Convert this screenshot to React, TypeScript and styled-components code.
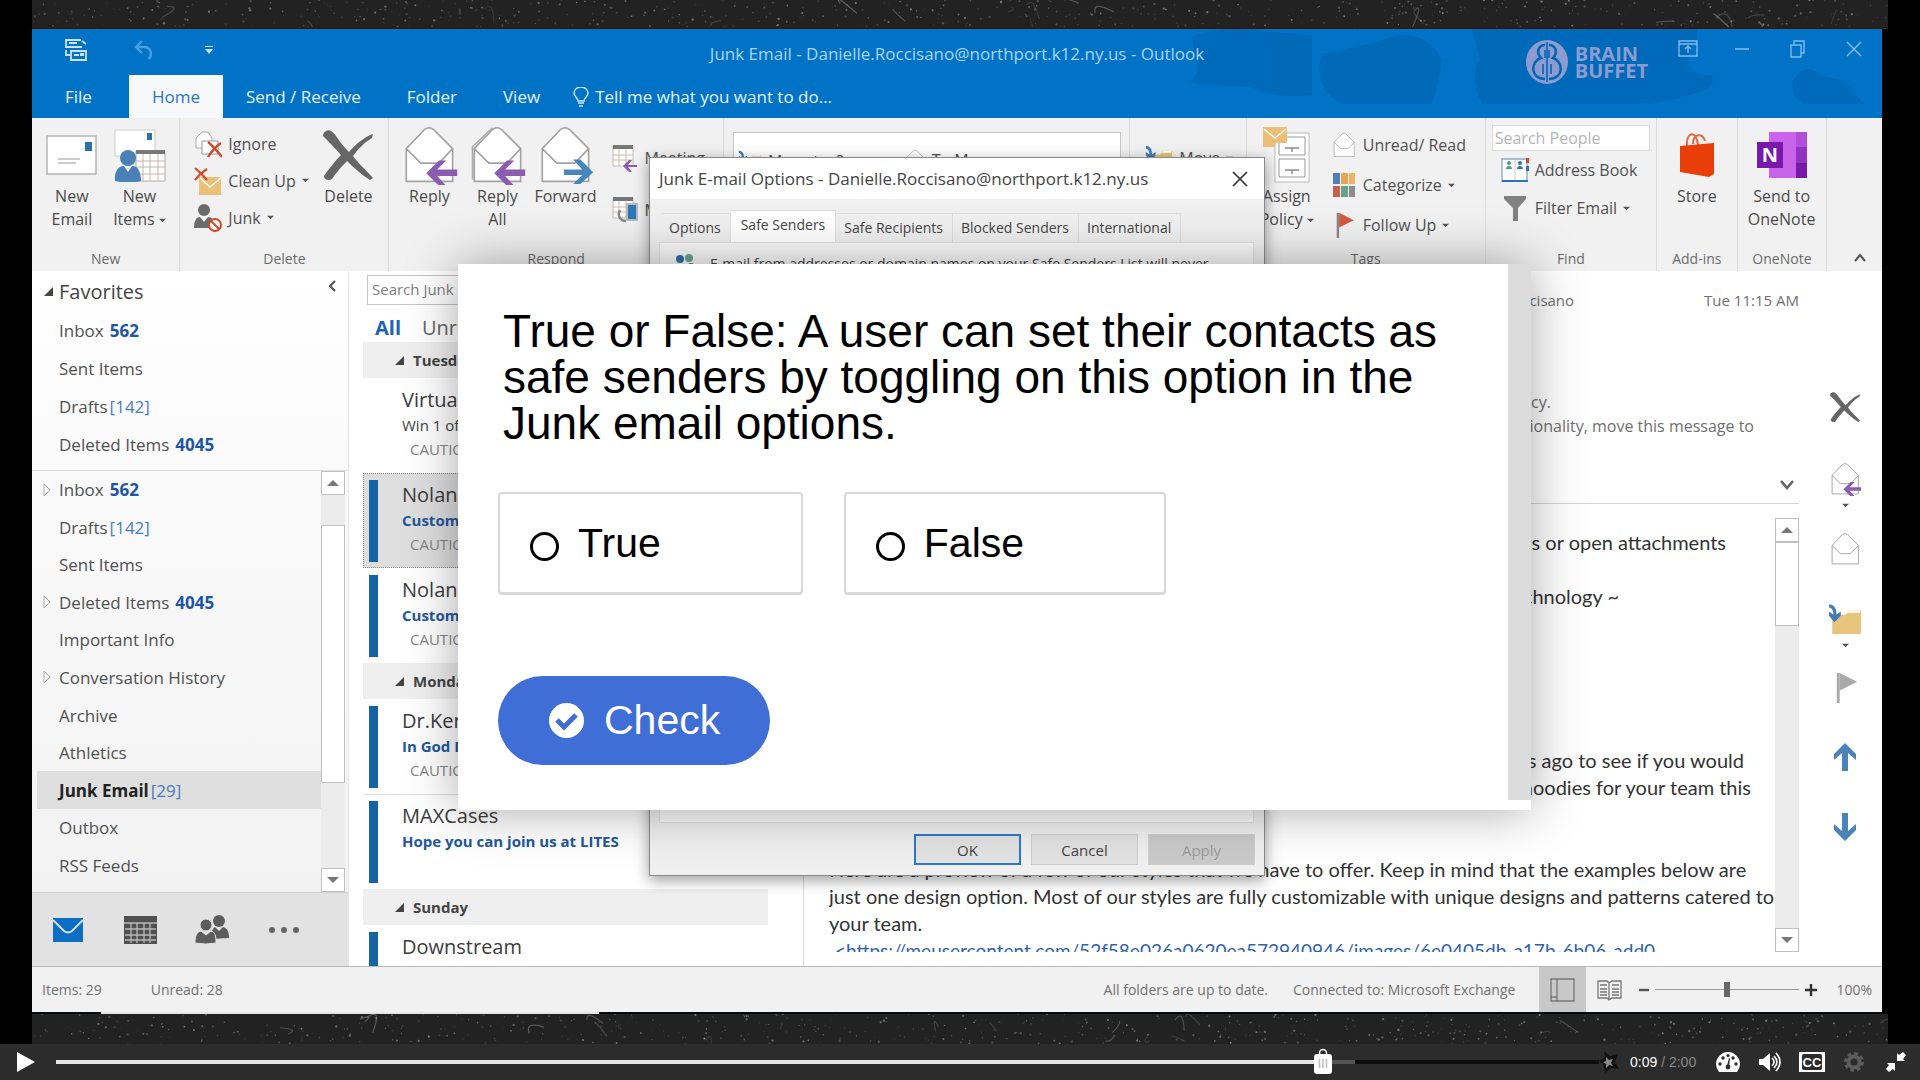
import React, { useState } from "react";
import styled, { createGlobalStyle, css } from "styled-components";

const UI = '"Open Sans", "Noto Sans", sans-serif';
const ARIAL = '"Liberation Sans", Arial, sans-serif';

const GlobalStyle = createGlobalStyle`
  *, *::before, *::after { box-sizing: border-box; }
  body { margin: 0; background: #000; font-family: ${UI}; color: #444; overflow: hidden; }
  button, input { font: inherit; color: inherit; }
  button { border: 0; background: none; padding: 0; cursor: pointer; }
  svg { display: block; flex: none; }
  h2, p, ul { margin: 0; padding: 0; font-weight: 400; }
  ul { list-style: none; }
`;

/* ---------- player shell ---------- */

const Player = styled.div`
  display: flex;
  flex-direction: column;
  height: 100vh;
`;
const Stage = styled.main`
  position: relative;
  flex: 1;
  min-height: 0;
  display: flex;
  flex-direction: column;
  padding: 0 32px;
  overflow: hidden;
`;
const Strip = styled.svg<{ $h: number }>`
  width: 100%;
  height: ${(p) => p.$h}px;
  background: #222;
`;
const AppWindow = styled.section`
  position: relative;
  flex: 1;
  min-height: 0;
  margin-right: 6px;
  display: flex;
  flex-direction: column;
  background: #fff;
`;
const TaskLine = styled.div`
  height: 2px;
  background: #04080f;
  padding-left: 69px;
  flex: none;
  &::before {
    content: "";
    display: block;
    width: 498px;
    height: 2px;
    background: #e4e4e0;
  }
`;

function Grain({ h, seed }: { h: number; seed: number }) {
  let s = seed;
  const r = () => {
    s = (s * 16807) % 2147483647;
    return s / 2147483647;
  };
  for (let i = 0; i < 20; i++) r();
  const dots = Array.from({ length: 620 }, () => ({ x: r() * 1856, y: r() * h, w: 0.6 + r() * 1.3, o: 0.08 + r() * 0.4 }));
  const hairs = Array.from({ length: 22 }, () => {
    const x = r() * 1856;
    const y = r() * h;
    return { d: `M${x} ${y}q${r() * 24 - 8} ${r() * 20 - 14} ${r() * 28 - 8} ${r() * 24 - 8}`, o: 0.12 + r() * 0.3 };
  });
  return (
    <Strip $h={h} viewBox={`0 0 1856 ${h}`} preserveAspectRatio="xMidYMid slice" aria-hidden>
      {dots.map((d, i) => (
        <circle key={i} cx={d.x} cy={d.y} r={d.w / 1.6} fill="#ddd" opacity={d.o} />
      ))}
      {hairs.map((d, i) => (
        <path key={i} d={d.d} fill="none" stroke="#bbb" strokeWidth="1.2" opacity={d.o} />
      ))}
      {seed < 100 && <rect y={h - 2} width="1850" height="2" fill="#36190c" />}
    </Strip>
  );
}

/* ---------- title bar and tabs ---------- */

const Header = styled.header`
  position: relative;
  flex: none;
  background: #0173c7;
  color: #e6f2fc;
`;
const Art = styled.svg`
  position: absolute;
  right: 0;
  top: 0;
  width: 700px;
  height: 75px;
`;
const TitleRow = styled.div`
  position: relative;
  display: grid;
  grid-template-columns: 1fr auto 1fr;
  height: 46px;
  align-items: center;
`;
const QuickAccess = styled.div`
  display: flex;
  align-items: center;
  padding: 0 0 4px 32px;
  gap: 46px;
`;
const WindowTitle = styled.span`
  font-size: 17px;
  line-height: 22px;
  padding-top: 4px;
  color: #a9d3f5;
`;
const WindowButtons = styled.div`
  display: flex;
  justify-content: flex-end;
  padding: 0 16px 6px 0;
  gap: 32px;
  color: #7fb9ea;
`;
const Watermark = styled.div`
  position: absolute;
  right: 234px;
  top: 11px;
  display: flex;
  align-items: center;
  gap: 6px;
  color: #8d9bd0;
  font-size: 20px;
  font-weight: 700;
  line-height: 17px;
`;
const TabRow = styled.nav`
  position: relative;
  display: flex;
  height: 43px;
  font-size: 17px;
`;
const RibbonTab = styled.button<{ $active?: boolean; $wide?: boolean }>`
  padding: 0 23px;
  display: flex;
  align-items: center;
  gap: 8px;
  color: #e6f2fc;
  ${(p) => p.$wide && css`padding: 0 37px 0 33px;`}
  ${(p) => p.$active && css`background: #f6f8fa; color: #2b76bd;`}
`;
const TellMe = styled.button`
  display: flex;
  align-items: center;
  gap: 6px;
  padding-left: 10px;
  color: #e6f2fc;
`;

/* ---------- ribbon ---------- */

const Ribbon = styled.div`
  flex: none;
  height: 153px;
  display: flex;
  background: #f1f1f1;
`;
const Group = styled.section<{ $grow: number }>`
  flex: ${(p) => p.$grow} 1 0;
  min-width: 0;
  display: flex;
  flex-direction: column;
  border-right: 1px solid #dcdcdc;
  &:last-child { border-right: 0; }
`;
const GroupBody = styled.div<{ $pad?: number }>`
  flex: 1;
  display: flex;
  padding: 7px 6px 0 ${(p) => p.$pad ?? 6}px;
`;
const GroupLabel = styled.span`
  font-size: 14px;
  line-height: 24px;
  text-align: center;
  color: #6b6b6b;
`;
const BigButton = styled.button`
  width: 68px;
  display: flex;
  flex-direction: column;
  align-items: center;
  font-size: 16px;
  line-height: 23px;
  color: #4a4a4a;
  white-space: pre;
`;
const IconBox = styled.span`
  height: 60px;
  display: flex;
  align-items: center;
  justify-content: center;
`;
const SmallStack = styled.div<{ $pitch: number; $left?: number; $top?: number }>`
  flex: 1;
  display: flex;
  flex-direction: column;
  padding: ${(p) => p.$top ?? 0}px 0 0 ${(p) => p.$left ?? 0}px;
  > button { height: ${(p) => p.$pitch}px; }
`;
const SmallButton = styled.button`
  display: flex;
  align-items: center;
  gap: 6px;
  font-size: 16px;
  color: #505050;
  white-space: nowrap;
`;
const StepsBox = styled.div`
  flex: 1;
  margin: 7px 2px 0 3px;
  height: 90px;
  padding: 16px 4px;
  display: flex;
  align-items: flex-start;
  gap: 60px;
  background: #fff;
  border: 1px solid #c6c6c6;
`;
const PeopleSearch = styled.input`
  width: 100%;
  height: 26px;
  border: 1px solid #dadada;
  background: #fff;
  padding: 0 2px;
  font-size: 16px;
  outline: 0;
  &::placeholder { color: #b5b5b5; }
`;
const Collapse = styled.button`
  margin: auto 15px 6px auto;
  color: #555;
`;

const Caret = ({ size = 7, color = "#555" }: { size?: number; color?: string }) => (
  <svg width={size} height={size} viewBox="0 0 8 8"><path d="M0 2h8L4 6z" fill={color} /></svg>
);

const Cross = ({ size }: { size: number }) => (
  <svg width={size} height={size} viewBox="0 0 50 50">
    <path d="M3 1C7-1 10 2 13 6c4 6 8 11 13 16C32 15 41 7 50 4l-1 4c-7 4-14 11-19 18 5 7 13 14 20 22l-3 2C39 45 31 38 24 31 18 37 13 43 9 49c-3 2-8 1-8-3C6 39 12 31 18 25 12 18 6 12 0 6c0-2 1-4 3-5z" fill="#666" />
  </svg>
);

const OpenMail = ({ size, arrow, all }: { size: number; arrow?: "left" | "right"; all?: boolean }) => (
  <svg width={size} height={size} viewBox="0 0 58 66">
    {all && <path d="M2 60V24L24 3" fill="none" stroke="#aaa" strokeWidth="1.6" />}
    <path d="M4 26 24 5q5-4 10 0L55 26v36H4z" fill="#fff" stroke="#a2a2a2" strokeWidth="1.8" />
    <path d="M4 26 20 42h20L55 26" fill="none" stroke="#a2a2a2" strokeWidth="1.8" />
    {arrow === "left" && <path d="M60 49H38L48 39h-8L26 53l14 14h8L38 56h22z" fill="#8c5cb0" />}
    {arrow === "right" && <path d="M28 49h20L38 38h8l14 14-14 13h-8l10-10H28z" fill="#4785bd" />}
  </svg>
);

const FolderMove = ({ size = 28 }: { size?: number }) => (
  <svg width={size} height={size} viewBox="0 0 32 32">
    <path d="M4 12h13l3-4h11v22H4z" fill="#e8c57c" />
    <path d="M18 10l3-2h9v2z" fill="#fff" />
    <path d="M1 2c6 1 7 5 7 10l4-3v4l-6 6-5-6V9l4 3c0-4-1-6-4-7z" fill="#3f7bb5" />
  </svg>
);

const Flag = ({ color, pole, size }: { color: string; pole: string; size: number }) => (
  <svg width={size} height={size} viewBox="0 0 28 32">
    <path d="M5 1h3v31H5z" fill={pole} />
    <path d="M8 1l18 9L8 19z" fill={color} />
  </svg>
);

const MeetingIcon = ({ kind }: { kind: "reply" | "phone" }) => (
  <svg width="26" height="28" viewBox="0 0 26 28">
    <path d="M1 2h20v20H1z" fill="#fff" stroke="#bbb" />
    <path d="M1 1h20v4H1z" fill="#777" />
    <path d="M1 11h20M1 16h20M7 5v17M14 5v17" stroke="#d5b8a8" strokeWidth="1" />
    {kind === "reply" ? (
      <path d="M25 21h-9l4-5h-3l-6 6 6 6h3l-4-5h9z" fill="#8c5cb0" />
    ) : (
      <g>
        <path d="M15 8h10v16H15z" fill="#2f78b9" stroke="#bbb" strokeWidth="2" />
        <path d="M8 14c-3 5 0 11 6 11" fill="none" stroke="#888" strokeWidth="2.4" />
      </g>
    )}
  </svg>
);

function RibbonBar() {
  return (
    <Ribbon>
      <Group $grow={148}>
        <GroupBody>
          <BigButton>
            <IconBox>
              <svg width="51" height="42" viewBox="0 0 51 42">
                <path d="M1 2h49v38H1z" fill="#fff" stroke="#b4b4b4" strokeWidth="1.5" />
                <path d="M39 8h7v9h-7z" fill="#2c6fb3" />
                <path d="M12 25h22M12 29h18" stroke="#bbb" strokeWidth="1.5" />
              </svg>
            </IconBox>
            {"New\nEmail"}
          </BigButton>
          <BigButton>
            <IconBox>
              <svg width="52" height="54" viewBox="0 0 52 54">
                <path d="M1 2h40v26H1z" fill="#fff" stroke="#ccc" />
                <path d="M33 5h5v7h-5z" fill="#2c6fb3" />
                <path d="M22 23h29v30H22z" fill="#fff" stroke="#aaa" />
                <path d="M22 22h29v4H22z" fill="#777" />
                <path d="M22 33h29M22 39h29M22 46h29M29 26v27M36 26v27M44 26v27" stroke="#c9b3aa" />
                <circle cx="14" cy="30" r="8" fill="#4a80b8" />
                <path d="M1 53c-1-9 3-15 9-15l4 6 4-6c6 0 9 6 9 15-8 2-18 2-26 0z" fill="#4a80b8" />
              </svg>
            </IconBox>
            <span>New{"\n"}Items <Inline><Caret /></Inline></span>
          </BigButton>
        </GroupBody>
        <GroupLabel>New</GroupLabel>
      </Group>

      <Group $grow={209}>
        <GroupBody $pad={14}>
          <SmallStack $pitch={37}>
            <SmallButton>
              <svg width="28" height="28" viewBox="0 0 28 28">
                <path d="M2 8l6-6h6l4 6v10H2z" fill="#fff" stroke="#aaa" />
                <path d="M8 11h16v13H8z" fill="#fff" stroke="#999" />
                <path d="M14 12c5 4 9 9 14 15M27 13c-6 4-10 9-13 14" stroke="#d2492a" strokeWidth="2.4" />
              </svg>
              Ignore
            </SmallButton>
            <SmallButton>
              <svg width="28" height="28" viewBox="0 0 28 28">
                <path d="M5 10h22v18H5z" fill="#ecc078" />
                <path d="M6 11l10 9 11-9" fill="none" stroke="#fff" strokeWidth="1.4" />
                <path d="M1 1c5 4 8 7 12 12M13 2C8 5 4 9 1 13" stroke="#d2492a" strokeWidth="2.2" />
              </svg>
              Clean Up <Caret />
            </SmallButton>
            <SmallButton>
              <svg width="28" height="28" viewBox="0 0 28 28">
                <circle cx="10" cy="6" r="6" fill="#6b6b6b" />
                <path d="M0 24c0-8 3-11 6-11l4 5 4-5c4 0 6 3 6 11z" fill="#6b6b6b" />
                <circle cx="21" cy="21" r="6" fill="#fff" stroke="#d2492a" strokeWidth="2" />
                <path d="M17 17l8 8" stroke="#d2492a" strokeWidth="2" />
              </svg>
              Junk <Caret />
            </SmallButton>
          </SmallStack>
          <BigButton>
            <IconBox><Cross size={50} /></IconBox>
            Delete
          </BigButton>
        </GroupBody>
        <GroupLabel>Delete</GroupLabel>
      </Group>

      <Group $grow={335}>
        <GroupBody>
          <BigButton><IconBox><OpenMail size={60} arrow="left" /></IconBox>Reply</BigButton>
          <BigButton><IconBox><OpenMail size={60} arrow="left" all /></IconBox>{"Reply\nAll"}</BigButton>
          <BigButton><IconBox><OpenMail size={60} arrow="right" /></IconBox>Forward</BigButton>
          <SmallStack $pitch={52} $left={13} $top={7}>
            <SmallButton><MeetingIcon kind="reply" />Meeting</SmallButton>
            <SmallButton><MeetingIcon kind="phone" />More</SmallButton>
          </SmallStack>
        </GroupBody>
        <GroupLabel>Respond</GroupLabel>
      </Group>

      <Group $grow={407}>
        <GroupBody>
          <StepsBox>
            <SmallButton><FolderMove size={24} />Move to: ?</SmallButton>
            <SmallButton><OpenMail size={22} />To Manager</SmallButton>
          </StepsBox>
        </GroupBody>
        <GroupLabel>Quick Steps</GroupLabel>
      </Group>

      <Group $grow={116}>
        <GroupBody $pad={15}>
          <SmallStack $pitch={52} $top={7}>
            <SmallButton><FolderMove size={28} />Move <Caret /></SmallButton>
          </SmallStack>
        </GroupBody>
        <GroupLabel>Move</GroupLabel>
      </Group>

      <Group $grow={239}>
        <GroupBody>
          <BigButton>
            <IconBox>
              <svg width="48" height="56" viewBox="0 0 48 56">
                <path d="M12 6h34v49H12z" fill="#fff" stroke="#bbb" />
                <path d="M16 10h26v18H16zM16 32h26v18H16z" fill="#fff" stroke="#999" />
                <path d="M22 21h14M29 21v4M22 43h14M29 43v4" stroke="#888" strokeWidth="1.4" />
                <path d="M0 0h24v16H12v4H0z" fill="#ebbf77" />
                <path d="M1 2l11 9L23 2" fill="none" stroke="#fff" strokeWidth="1.4" />
              </svg>
            </IconBox>
            <span>Assign{"\n"}Policy <Inline><Caret /></Inline></span>
          </BigButton>
          <SmallStack $pitch={40} $left={10}>
            <SmallButton><OpenMail size={26} />Unread/ Read</SmallButton>
            <SmallButton>
              <svg width="26" height="26" viewBox="0 0 26 26">
                <path d="M2 1h7v11H2z" fill="#4f7fb5" /><path d="M10 1h7v11h-7z" fill="#e8a552" /><path d="M18 1h6v11h-6z" fill="#eeb463" />
                <path d="M2 14h7v11H2z" fill="#c9614d" /><path d="M10 14h7v11h-7z" fill="#67a386" /><path d="M18 14h6v11h-6z" fill="#8d8d8d" />
              </svg>
              Categorize <Caret />
            </SmallButton>
            <SmallButton><Flag size={26} color="#d4593f" pole="#888" />Follow Up <Caret /></SmallButton>
          </SmallStack>
        </GroupBody>
        <GroupLabel>Tags</GroupLabel>
      </Group>

      <Group $grow={171}>
        <GroupBody>
          <SmallStack $pitch={38}>
            <PeopleSearch aria-label="Search People" placeholder="Search People" />
            <SmallButton>
              <Indent />
              <svg width="28" height="26" viewBox="0 0 28 26">
                <path d="M1 2h25v22H1z" fill="#fff" stroke="#8fa9c4" strokeWidth="1.4" />
                <path d="M1 24h26" stroke="#2f72b5" strokeWidth="2" />
                <path d="M14 3v20" stroke="#ccc" />
                <circle cx="8" cy="6" r="2" fill="#4b9c7d" /><path d="M5 12c0-4 6-4 6 0z" fill="#4b9c7d" />
                <circle cx="19" cy="6" r="2" fill="#2f72b5" /><path d="M16 12c0-4 6-4 6 0z" fill="#2f72b5" />
                <path d="M25 1h3v5h-3z" fill="#d2492a" /><path d="M25 9h3v5h-3z" fill="#2f72b5" />
              </svg>
              Address Book
            </SmallButton>
            <SmallButton>
              <Indent />
              <svg width="28" height="26" viewBox="0 0 28 26"><path d="M3 1h22v3l-8 9v13h-5V13L3 4z" fill="#818181" /></svg>
              Filter Email <Caret />
            </SmallButton>
          </SmallStack>
        </GroupBody>
        <GroupLabel>Find</GroupLabel>
      </Group>

      <Group $grow={80}>
        <GroupBody>
          <BigButton>
            <IconBox>
              <svg width="38" height="46" viewBox="0 0 38 46">
                <path d="M9 14C8 3 14 0 17 4s3 6 3 9M15 12C15 2 24 0 27 9" fill="none" stroke="#e8673f" strokeWidth="2" />
                <path d="M2 14l34-3v31l-5 3L2 40z" fill="#ea3e08" />
              </svg>
            </IconBox>
            Store
          </BigButton>
        </GroupBody>
        <GroupLabel>Add-ins</GroupLabel>
      </Group>

      <Group $grow={89}>
        <GroupBody $pad={10}>
          <BigButton>
            <IconBox>
              <svg width="50" height="48" viewBox="0 0 50 48">
                <path d="M12 1h38v46H12z" fill="#c863ea" />
                <path d="M39 1h11v15H39z" fill="#b04fd8" /><path d="M39 16h11v16H39z" fill="#9332bf" /><path d="M39 32h11v15H39z" fill="#7719aa" />
                <path d="M0 11h26v26H0z" fill="#7719aa" />
                <text x="13" y="31" textAnchor="middle" fontFamily="Open Sans" fontWeight="700" fontSize="20" fill="#fff">N</text>
              </svg>
            </IconBox>
            <span>Send to{"\n"}OneNote</span>
          </BigButton>
        </GroupBody>
        <GroupLabel>OneNote</GroupLabel>
      </Group>

      <Group $grow={55}>
        <Collapse aria-label="Collapse ribbon">
          <svg width="14" height="14" viewBox="0 0 14 14"><path d="M2 10l5-6 5 6" fill="none" stroke="currentColor" strokeWidth="2" /></svg>
        </Collapse>
      </Group>
    </Ribbon>
  );
}

const Inline = styled.span`
  display: inline-block;
  vertical-align: middle;
`;
const Indent = styled.span`
  width: 3px;
`;

/* ---------- workspace ---------- */

const Workspace = styled.div`
  flex: 1;
  min-height: 0;
  display: grid;
  grid-template-columns: 317px 455px 1fr;
`;
const FolderPane = styled.aside`
  display: flex;
  flex-direction: column;
  min-height: 0;
  border-right: 1px solid #e4e4e4;
  background: linear-gradient(#fff, #fafafa 30%, #f1f1f1);
`;
const FavHead = styled.div`
  height: 41px;
  display: flex;
  align-items: center;
  gap: 6px;
  padding: 0 12px;
  font-size: 20px;
  color: #444;
  > button { margin: 0 0 12px auto; }
`;
const FolderRows = styled.ul<{ $h: number }>`
  flex: 1;
  max-height: ${(p) => p.$h}px;
  display: grid;
  grid-auto-rows: 1fr;
`;
const FolderRow = styled.li<{ $active?: boolean }>`
  display: flex;
  align-items: center;
  padding-left: 6px;
  margin-left: 5px;
  font-size: 17px;
  color: #505050;
  ${(p) => p.$active && css`background: #dfdfdf; color: #222; font-weight: 700;`}
`;
const Twisty = styled.span`
  width: 16px;
`;
const Count = styled.span<{ $draft?: boolean }>`
  color: ${(p) => (p.$draft ? "#4a7cc0" : "#1f55a5")};
  font-weight: ${(p) => (p.$draft ? 400 : 700)};
  padding-left: ${(p) => (p.$draft ? 2 : 6)}px;
`;
const Tree = styled.div`
  flex: 1;
  min-height: 0;
  margin-top: 7px;
  display: grid;
  grid-template-columns: 1fr 24px;
  padding-right: 3px;
  border-top: 1px solid #dedede;
`;
const Rail = styled.div`
  display: flex;
  flex-direction: column;
  background: #ececec;
`;
const RailButton = styled.button`
  height: 24px;
  flex: none;
  display: grid;
  place-items: center;
  background: #fff;
  border: 1px solid #c0c0c0;
`;
const Thumb = styled.div<{ $before: number; $after: number }>`
  flex: 1;
  background: #fff;
  border: 1px solid #c0c0c0;
  margin-top: ${(p) => p.$before}px;
  margin-bottom: ${(p) => p.$after}px;
`;
const NavBar = styled.nav`
  flex: none;
  height: 74px;
  display: flex;
  align-items: center;
  background: #e2e2e2;
  border-top: 1px solid #d2d2d2;
  > button { width: 72px; height: 100%; display: grid; place-items: center; }
`;

const ListPane = styled.section`
  min-height: 0;
  overflow: hidden;
  padding: 4px 35px 0 14px;
  border-right: 1px solid #dcdcdc;
`;
const JunkSearch = styled.input`
  display: block;
  width: 396px;
  height: 30px;
  margin-left: 4px;
  border: 1px solid #c4c4c4;
  padding: 0 4px 3px;
  font-size: 15px;
  outline: 0;
  &::placeholder { color: #808080; }
`;
const Filters = styled.div`
  display: flex;
  align-items: center;
  gap: 21px;
  height: 37px;
  padding: 8px 0 0 12px;
  font-size: 20px;
`;
const FilterButton = styled.button<{ $active?: boolean }>`
  color: ${(p) => (p.$active ? "#1d63b3" : "#666")};
  font-weight: ${(p) => (p.$active ? 700 : 400)};
`;
const DayHead = styled.div`
  height: 36px;
  display: flex;
  align-items: center;
  gap: 9px;
  padding-left: 32px;
  background: #efefef;
  font-size: 15px;
  font-weight: 700;
  color: #444;
`;
const Message = styled.article<{ $unread?: boolean; $selected?: boolean; $line?: boolean }>`
  height: 95px;
  padding: 6px 5px 5px;
  display: grid;
  grid-template-columns: 9px 1fr;
  column-gap: 24px;
  white-space: nowrap;
  border: 1px solid transparent;
  ${(p) => p.$line && css`border-top-color: #dcdcdc;`}
  ${(p) => p.$selected && css`background: #dedede; border: 1px dotted #888;`}
  &::before { content: ""; background: ${(p) => (p.$unread ? "#1464a5" : "transparent")}; }
`;
const Sender = styled.p`
  font-size: 20px;
  line-height: 29px;
  color: #3c3c3c;
`;
const Subject = styled.p<{ $unread?: boolean }>`
  font-size: 15px;
  line-height: 22px;
  ${(p) => p.$unread && css`font-weight: 700; color: #2358a0;`}
`;
const Preview = styled.p`
  font-size: 15px;
  line-height: 26px;
  padding-left: 8px;
  color: #858585;
`;

const Reader = styled.section`
  min-width: 0;
  min-height: 0;
  display: grid;
  grid-template-columns: 1fr 83px;
`;
const ReadMain = styled.div`
  min-width: 0;
  min-height: 0;
  display: flex;
  flex-direction: column;
  padding: 0 0 14px 25px;
`;
const ReadHead = styled.div`
  height: 233px;
  flex: none;
  display: flex;
  flex-direction: column;
  padding-top: 17px;
  border-bottom: 1px solid #d4d4d4;
  color: #707070;
`;
const MetaRow = styled.div`
  display: flex;
  justify-content: flex-end;
  gap: 130px;
  height: 102px;
  line-height: 24px;
  font-size: 15px;
`;
const Notice = styled.p<{ $inset: number }>`
  font-size: 16px;
  line-height: 24px;
  text-align: right;
  padding-right: ${(p) => p.$inset}px;
`;
const Expand = styled.button`
  margin: auto 4px 12px auto;
  color: #666;
`;
const BodyArea = styled.div`
  flex: 1;
  min-height: 0;
  margin-top: 14px;
  display: grid;
  grid-template-columns: 1fr 24px;
`;
const BodyText = styled.div`
  min-width: 0;
  min-height: 0;
  overflow: hidden;
  padding-top: 11px;
  font-family: "Lato", "Open Sans", sans-serif;
  font-size: 20px;
  line-height: 27px;
  color: #333;
`;
const Line = styled.p<{ $inset?: number; $gap?: number }>`
  height: 27px;
  white-space: nowrap;
  margin-bottom: ${(p) => p.$gap ?? 0}px;
  ${(p) => p.$inset !== undefined && css`text-align: right; padding-right: ${p.$inset}px;`}
`;
const MailLink = styled.a`
  color: #2f63ad;
  font-size: 19px;
  margin-left: 6px;
`;
const Actions = styled.div`
  display: flex;
  flex-direction: column;
  align-items: center;
  padding: 108px 0 0 9px;
  > button {
    height: 70px;
    display: flex;
    flex-direction: column;
    align-items: center;
    justify-content: flex-start;
    padding-top: 13px;
    gap: 6px;
  }
`;

const StatusBar = styled.footer`
  flex: none;
  height: 46px;
  display: flex;
  align-items: center;
  background: #f1f1f1;
  border-top: 1px solid #b8b8b8;
  font-size: 14px;
  color: #707070;
`;
const StatusText = styled.span<{ $left: number }>`
  padding-left: ${(p) => p.$left}px;
`;
const Push = styled.span`
  flex: 1;
`;
const ViewButton = styled.button<{ $active?: boolean }>`
  width: 47px;
  height: 100%;
  display: grid;
  place-items: center;
  background: ${(p) => (p.$active ? "#c8c8c8" : "transparent")};
`;
const ZoomBox = styled.div`
  display: flex;
  align-items: center;
  gap: 6px;
  padding: 0 10px 0 6px;
  > span { margin-left: 13px; }
`;
const ZoomRange = styled.input`
  appearance: none;
  width: 144px;
  height: 18px;
  margin: 0;
  background: linear-gradient(#999, #999) center / 100% 1px no-repeat;
  &::-webkit-slider-thumb { appearance: none; width: 6px; height: 15px; background: #666; }
`;

const Up = () => <svg width="14" height="8" viewBox="0 0 14 8"><path d="M1 7l6-6 6 6z" fill="#777" /></svg>;
const Down = () => <svg width="12" height="7" viewBox="0 0 12 7"><path d="M0 0h12L6 6z" fill="#777" /></svg>;
const Wedge = ({ s = 9 }: { s?: number }) => <svg width={s} height={s} viewBox="0 0 10 10"><path d="M10 0v10H0z" fill="#444" /></svg>;

type Folder = { name: string; count?: string; draft?: boolean; twisty?: boolean; active?: boolean };
const favourites: Folder[] = [
  { name: "Inbox", count: "562" },
  { name: "Sent Items" },
  { name: "Drafts", count: "[142]", draft: true },
  { name: "Deleted Items", count: "4045" },
];
const folders: Folder[] = [
  { name: "Inbox", count: "562", twisty: true },
  { name: "Drafts", count: "[142]", draft: true },
  { name: "Sent Items" },
  { name: "Deleted Items", count: "4045", twisty: true },
  { name: "Important Info" },
  { name: "Conversation History", twisty: true },
  { name: "Archive" },
  { name: "Athletics" },
  { name: "Junk Email", count: "[29]", draft: true, active: true },
  { name: "Outbox" },
  { name: "RSS Feeds" },
];

const Folders = ({ items, h }: { items: Folder[]; h: number }) => (
  <FolderRows $h={h}>
    {items.map((f) => (
      <FolderRow key={f.name} $active={f.active}>
        <Twisty>
          {f.twisty && <svg width="8" height="14" viewBox="0 0 8 14"><path d="M1 1l6 6-6 6z" fill="#fff" stroke="#aaa" /></svg>}
        </Twisty>
        {f.name}
        {f.count && <Count $draft={f.draft}>{f.count}</Count>}
      </FolderRow>
    ))}
  </FolderRows>
);

type Mail = { from: string; subject: string; preview?: string; unread?: boolean; selected?: boolean; line?: boolean };
const days: { day: string; mails: Mail[] }[] = [
  {
    day: "Tuesday",
    mails: [
      { from: "Virtual", subject: "Win 1 of", preview: "CAUTION" },
      { from: "Nolan", subject: "Custom", preview: "CAUTION", unread: true, selected: true },
      { from: "Nolan", subject: "Custom", preview: "CAUTION", unread: true },
    ],
  },
  {
    day: "Monday",
    mails: [
      { from: "Dr.Ken", subject: "In God I", preview: "CAUTION", unread: true },
      { from: "MAXCases", subject: "Hope you can join us at LITES", unread: true, line: true },
    ],
  },
  { day: "Sunday", mails: [{ from: "Downstream", subject: "Ready's Thursday’s Leave Friday...  Sun 9:15 AM", unread: true }] },
];

/* ---------- junk options dialog ---------- */

const Dialog = styled.section`
  position: absolute;
  left: 617px;
  top: 128px;
  width: 616px;
  height: 719px;
  display: flex;
  flex-direction: column;
  background: #f0f0f0;
  border: 1px solid #8a8a8a;
  box-shadow: 0 4px 14px rgba(0, 0, 0, 0.4);
  color: #444;
`;
const DialogTitle = styled.div`
  height: 41px;
  display: flex;
  align-items: center;
  justify-content: space-between;
  padding: 0 16px 0 9px;
  background: #fff;
  font-size: 17px;
`;
const DialogTabs = styled.div`
  height: 43px;
  display: flex;
  align-items: flex-end;
  padding-left: 11px;
  font-size: 14px;
`;
const DialogTab = styled.button<{ $active?: boolean }>`
  height: ${(p) => (p.$active ? 32 : 29)}px;
  padding: 0 9px 2px 8px;
  border: 1px solid #dedede;
  border-width: 1px 1px 0 0;
  ${(p) => p.$active && css`background: #fff; padding: 0 10px 4px;`}
`;
const DialogPanel = styled.div`
  flex: 1;
  margin: 0 10px 0 9px;
  padding: 11px 16px;
  display: flex;
  align-items: flex-start;
  gap: 14px;
  background: #fbfbfb;
  border: 1px solid #e2e2e2;
  font-size: 14px;
  line-height: 20px;
  white-space: nowrap;
`;
const DialogButtons = styled.div`
  height: 52px;
  display: flex;
  justify-content: flex-end;
  gap: 10px;
  padding: 11px 9px 0 0;
`;
const DialogButton = styled.button<{ $primary?: boolean }>`
  width: 107px;
  height: 31px;
  font-size: 15px;
  background: #e2e2e2;
  border: ${(p) => (p.$primary ? "2px solid #2f78c8" : "1px solid #cfcfcf")};
  &:disabled { background: #cacaca; color: #9a9a9a; }
`;

/* ---------- quiz card ---------- */

const Quiz = styled.form`
  position: absolute;
  left: 458px;
  right: 389px;
  top: 264px;
  display: flex;
  padding-bottom: 10px;
  background: #fff;
  box-shadow: 0 0 48px rgba(0, 0, 0, 0.35);
  font-family: ${ARIAL};
  color: #000;
`;
const QuizMain = styled.div`
  flex: 1;
  padding: 44px 40px 35px;
`;
const QuizRail = styled.div`
  width: 23px;
  background: #dcdcdc;
`;
const Question = styled.h2`
  font-size: 46px;
  line-height: 46px;
  padding-left: 5px;
`;
const Answers = styled.div`
  display: flex;
  gap: 41px;
  margin: 46px 0 81px;
`;
const Answer = styled.label`
  height: 103px;
  display: flex;
  align-items: center;
  gap: 19px;
  padding: 0 140px 0 30px;
  border: 2px solid #d8d8d8;
  border-bottom-width: 3px;
  border-radius: 4px;
  font-size: 41px;
  line-height: 46px;
`;
const Radio = styled.input`
  appearance: none;
  width: 29px;
  height: 29px;
  margin: 6px 0 0;
  border: 3px solid #000;
  border-radius: 50%;
  &:checked { box-shadow: inset 0 0 0 5px #fff; background: #000; }
`;
const CheckButton = styled.button`
  height: 89px;
  display: flex;
  align-items: center;
  gap: 20px;
  padding: 0 50px 0 51px;
  border-radius: 45px;
  background: #3f6ed6;
  color: #fff;
  font-size: 41px;
`;

/* ---------- player controls ---------- */

const Controls = styled.div`
  flex: none;
  height: 36px;
  display: flex;
  align-items: center;
  padding: 0 14px 0 17px;
  background: #2c2c2c;
  color: #fff;
  font-family: ${ARIAL};
  font-size: 14px;
`;
const grip = encodeURIComponent(
  '<svg xmlns="http://www.w3.org/2000/svg" width="18" height="28"><circle cx="9" cy="5" r="3.5" fill="none" stroke="#fff" stroke-width="1.6"/><rect y="6" width="18" height="20" rx="3" fill="#fff"/><path d="M5.500 11v9M9 11v9M12.500 11v9" stroke="#bbb" stroke-width="1.500"/></svg>'
);
const Seek = styled.input`
  appearance: none;
  flex: 1;
  height: 28px;
  margin: 0 0 0 21px;
  background: linear-gradient(90deg, #e6e6e6 82.1%, #555 82.1% 84.2%, #0d0d0d 84.2%) center / 100% 4px no-repeat;
  &::-webkit-slider-thumb {
    appearance: none;
    width: 18px;
    height: 28px;
    background: url("data:image/svg+xml,${grip}");
  }
`;
const Time = styled.span`
  width: 68px;
  margin: 0 18px 0 11px;
  white-space: nowrap;
  > span { color: #8a8a8a; }
`;
const ControlIcons = styled.div`
  display: flex;
  > button { width: 42px; height: 26px; display: grid; place-items: center; }
  > button:first-child { width: 24px; margin-right: 9px; }
  > button:last-child { width: 20px; margin-left: 11px; }
`;

const Arrow = ({ flip }: { flip?: boolean }) => (
  <svg width="24" height="30" viewBox="0 0 24 30">
    <path d={flip ? "M9 1h6v18l8-7v6L12 29 1 18v-6l8 7z" : "M9 29h6V11l8 7v-6L12 1 1 12v6l8-7z"} fill="#4a83b8" />
  </svg>
);

export default function App() {
  const [answer, setAnswer] = useState("");
  const [pos, setPos] = useState(82.5);
  const [zoom, setZoom] = useState(50);

  return (
    <Player>
      <GlobalStyle />
      <Stage>
        <Grain h={29} seed={77} />
        <AppWindow>
          <Header>
            <Art viewBox="0 0 700 75" preserveAspectRatio="none" aria-hidden>
              <g fill="#0067b5" opacity="0.75">
                <path d="M10 8q30-12 70-6l50 4v60q-40 4-60-8Q40 58 8 54q12-14 6-20z" />
                <path d="M140 25q40-8 60-14 40-16 60 20-4 30-10 44h-90q-30-16-20-50z" />
                <path d="M290 0h225v10q-20 30 5 36 20-2 5 14-40 16-80 15H300q-14-30-2-45z" />
                <path d="M612 50q12-18 26-4l24 6q12 14 20 23h-60q-16-10-10-25z" />
              </g>
            </Art>
            <TitleRow>
              <QuickAccess>
                <svg width="24" height="24" viewBox="0 0 24 24" fill="none" stroke="#cde4f8" strokeWidth="1.8">
                  <path d="M18 9H2V2h15M5 5h8M7 13h15v9H7zM10 17h5M2 12v5h4M18 3l4 3" />
                  <path d="M16 15h4v3h-4z" fill="#cde4f8" stroke="none" />
                </svg>
                <svg width="19" height="20" viewBox="0 0 19 20" fill="none" stroke="#4a9fdf" strokeWidth="2.4">
                  <path d="M8 1L2 7l6 6M2 7h8c6 0 9 6 5 12" />
                </svg>
                <svg width="20" height="8" viewBox="0 0 20 8"><path d="M6 0h8v1H6zM6 3h8l-4 5z" fill="#cde4f8" /></svg>
              </QuickAccess>
              <WindowTitle>Junk Email - Danielle.Roccisano@northport.k12.ny.us - Outlook</WindowTitle>
              <WindowButtons>
                <button aria-label="Ribbon display options">
                  <svg width="20" height="18" viewBox="0 0 20 18" fill="none" stroke="currentColor" strokeWidth="1.4"><path d="M1 1h18v15H1zM1 4h18M10 13V7M7 9l3-3 3 3" /></svg>
                </button>
                <button aria-label="Minimize">
                  <svg width="24" height="18" viewBox="0 0 24 18" stroke="currentColor" strokeWidth="1.6"><path d="M5 9h14" /></svg>
                </button>
                <button aria-label="Restore">
                  <svg width="24" height="18" viewBox="0 0 24 18" fill="none" stroke="currentColor" strokeWidth="1.4"><path d="M5 5h10v12H5zM8 5V1h10v12h-3" /></svg>
                </button>
                <button aria-label="Close window">
                  <svg width="24" height="18" viewBox="0 0 24 18" stroke="currentColor" strokeWidth="1.5"><path d="M5 2l14 14M19 2L5 16" /></svg>
                </button>
              </WindowButtons>
            </TitleRow>
            <TabRow>
              <RibbonTab $wide>File</RibbonTab>
              <RibbonTab $active>Home</RibbonTab>
              <RibbonTab>Send / Receive</RibbonTab>
              <RibbonTab>Folder</RibbonTab>
              <RibbonTab>View</RibbonTab>
              <TellMe>
                <svg width="16" height="20" viewBox="0 0 16 20" fill="none" stroke="#cde4f8" strokeWidth="1.5">
                  <path d="M5 14c0-3-4-4-4-8a7 6 0 0114 0c0 4-4 5-4 8zM5 16h6M6 19h4" />
                </svg>
                Tell me what you want to do...
              </TellMe>
            </TabRow>
            <Watermark>
              <svg width="44" height="44" viewBox="0 0 44 44">
                <ellipse cx="22" cy="22" rx="21" ry="22" fill="#8d9bd0" />
                <g fill="none" stroke="#0067b5" strokeWidth="2.6">
                  <path d="M20 5c-7 0-9 8-4 13-10 3-12 20 4 21M24 5c7 0 9 8 4 13 10 3 12 20-4 21" />
                  <path d="M22 2v40M20 10v8M24 10v8M18 24v10M26 24v10" strokeWidth="1.6" />
                </g>
              </svg>
              <span>BRAIN<br />BUFFET</span>
            </Watermark>
          </Header>

          <RibbonBar />

          <Workspace>
            <FolderPane>
              <FavHead>
                <Wedge />
                Favorites
                <button aria-label="Collapse folder pane">
                  <svg width="8" height="12" viewBox="0 0 8 12"><path d="M7 1L2 6l5 5" fill="none" stroke="#555" strokeWidth="2.2" /></svg>
                </button>
              </FavHead>
              <Folders items={favourites} h={151} />
              <Tree>
                <Folders items={folders} h={413} />
                <Rail>
                  <RailButton aria-label="Scroll folders up"><Up /></RailButton>
                  <Thumb $before={30} $after={85} />
                  <RailButton aria-label="Scroll folders down"><Down /></RailButton>
                </Rail>
              </Tree>
              <NavBar>
                <button aria-label="Mail">
                  <svg width="30" height="24" viewBox="0 0 30 24"><path d="M0 0h30v24H0z" fill="#0a6fc2" /><path d="M0 2l11 11q4 3 8 0L30 2" fill="none" stroke="#e2e2e2" strokeWidth="1.8" /></svg>
                </button>
                <button aria-label="Calendar">
                  <svg width="33" height="28" viewBox="0 0 33 28"><path d="M0 0h33v28H0z" fill="#505050" /><path d="M0 7h33M1 13h31M1 19h31M1 24h31M7 7v20M13 7v20M20 7v20M26 7v20" stroke="#b8b8b8" strokeWidth="1.3" /></svg>
                </button>
                <button aria-label="People">
                  <svg width="34" height="29" viewBox="0 0 34 29" fill="#5c5c5c">
                    <circle cx="24" cy="6" r="6" /><path d="M16 24c0-8 2-11 4-12l4 4 4-4c4 1 6 4 6 11z" />
                    <circle cx="11" cy="10" r="6" stroke="#e2e2e2" /><path d="M0 28c0-8 2-11 6-12l5 4 5-4c4 1 5 4 5 12q-10 2-21 0z" stroke="#e2e2e2" />
                  </svg>
                </button>
                <button aria-label="More">
                  <svg width="30" height="6" viewBox="0 0 30 6" fill="#666"><circle cx="3" cy="3" r="3" /><circle cx="15" cy="3" r="3" /><circle cx="27" cy="3" r="3" /></svg>
                </button>
              </NavBar>
            </FolderPane>

            <ListPane>
              <JunkSearch aria-label="Search Junk Email" placeholder="Search Junk Email" />
              <Filters>
                <FilterButton $active>All</FilterButton>
                <FilterButton>Unread</FilterButton>
              </Filters>
              {days.map((d) => (
                <React.Fragment key={d.day}>
                  <DayHead><Wedge />{d.day}</DayHead>
                  {d.mails.map((m, i) => (
                    <Message key={i} $unread={m.unread} $selected={m.selected} $line={m.line}>
                      <div>
                        <Sender>{m.from}</Sender>
                        <Subject $unread={m.unread}>{m.subject}</Subject>
                        {m.preview && <Preview>{m.preview}</Preview>}
                      </div>
                    </Message>
                  ))}
                </React.Fragment>
              ))}
            </ListPane>

            <Reader>
              <ReadMain>
                <ReadHead>
                  <MetaRow><span>Danielle Roccisano</span><span>Tue 11:15 AM</span></MetaRow>
                  <Notice $inset={248}>policy.</Notice>
                  <Notice $inset={45}>functionality, move this message to</Notice>
                  <Expand aria-label="Expand header">
                    <svg width="16" height="12" viewBox="0 0 16 12"><path d="M2 2l6 7 6-7" fill="none" stroke="currentColor" strokeWidth="2.6" /></svg>
                  </Expand>
                </ReadHead>
                <BodyArea>
                  <BodyText>
                    <Line $inset={49} $gap={27}>links or open attachments</Line>
                    <Line $inset={156} $gap={137}>Technology ~</Line>
                    <Line $inset={31}>days ago to see if you would</Line>
                    <Line $inset={24} $gap={55}>hoodies for your team this</Line>
                    <Line>Here are a preview of a few of our styles that we have to offer. Keep in mind that the examples below are</Line>
                    <Line>just one design option. Most of our styles are fully customizable with unique designs and patterns catered to</Line>
                    <Line>your team.</Line>
                    <Line><MailLink href="#">&lt;https://meusercontent.com/52f58e026a0620ea572940946/images/6e0405db-a17b-6b06-add0</MailLink></Line>
                  </BodyText>
                  <Rail>
                    <RailButton aria-label="Scroll message up"><Up /></RailButton>
                    <Thumb $before={0} $after={302} />
                    <RailButton aria-label="Scroll message down"><Down /></RailButton>
                  </Rail>
                </BodyArea>
              </ReadMain>
              <Actions>
                <button aria-label="Delete message"><Cross size={30} /></button>
                <button aria-label="Reply to message"><OpenMail size={34} arrow="left" /><Caret /></button>
                <button aria-label="Mark unread"><OpenMail size={34} /></button>
                <button aria-label="Move message"><FolderMove size={34} /><Caret /></button>
                <button aria-label="Flag message"><Flag size={31} color="#aaa" pole="#aaa" /></button>
                <button aria-label="Previous message"><Arrow /></button>
                <button aria-label="Next message"><Arrow flip /></button>
              </Actions>
            </Reader>
          </Workspace>

          <StatusBar>
            <StatusText $left={10}>Items: 29</StatusText>
            <StatusText $left={49}>Unread: 28</StatusText>
            <Push />
            <StatusText $left={0}>All folders are up to date.</StatusText>
            <StatusText $left={25}>Connected to: Microsoft Exchange</StatusText>
            <StatusText $left={24} />
            <ViewButton $active aria-label="Normal view">
              <svg width="25" height="24" viewBox="0 0 25 24" fill="none" stroke="#777" strokeWidth="1.3"><path d="M1 1h23v22H1zM7 1v22M1 19h6" /></svg>
            </ViewButton>
            <ViewButton aria-label="Reading view">
              <svg width="25" height="22" viewBox="0 0 25 22" fill="none" stroke="#777" strokeWidth="1.3"><path d="M1 2h9l2 2 3-2h9v17h-9l-3 2-2-2H1zM12 4v16M3 6h7M3 10h7M3 13h7M3 16h7M15 6h7M15 10h7M15 13h7M15 16h7" /></svg>
            </ViewButton>
            <ZoomBox>
              <svg width="10" height="10" viewBox="0 0 10 10" stroke="#555" strokeWidth="2.4"><path d="M0 5h10" /></svg>
              <ZoomRange type="range" aria-label="Zoom" value={zoom} onChange={(e) => setZoom(+e.target.value)} />
              <svg width="12" height="12" viewBox="0 0 12 12" stroke="#333" strokeWidth="2.4"><path d="M0 6h12M6 0v12" /></svg>
              <span>100%</span>
            </ZoomBox>
          </StatusBar>
          <TaskLine />

          <Dialog aria-label="Junk E-mail Options">
            <DialogTitle>
              Junk E-mail Options - Danielle.Roccisano@northport.k12.ny.us
              <button aria-label="Close dialog">
                <svg width="16" height="16" viewBox="0 0 16 16" stroke="#333" strokeWidth="1.7"><path d="M1 1l14 14M15 1L1 15" /></svg>
              </button>
            </DialogTitle>
            <DialogTabs>
              <DialogTab>Options</DialogTab>
              <DialogTab $active>Safe Senders</DialogTab>
              <DialogTab>Safe Recipients</DialogTab>
              <DialogTab>Blocked Senders</DialogTab>
              <DialogTab>International</DialogTab>
            </DialogTabs>
            <DialogPanel>
              <svg width="20" height="20" viewBox="0 0 20 20"><circle cx="4" cy="5" r="4" fill="#2f72a5" /><circle cx="13" cy="4" r="4" fill="#6aa78a" /><circle cx="15" cy="13" r="4" fill="#3c7fc0" /></svg>
              E-mail from addresses or domain names on your Safe Senders List will never
            </DialogPanel>
            <DialogButtons>
              <DialogButton $primary>OK</DialogButton>
              <DialogButton>Cancel</DialogButton>
              <DialogButton disabled>Apply</DialogButton>
            </DialogButtons>
          </Dialog>
        </AppWindow>
        <Grain h={30} seed={901} />

        <Quiz onSubmit={(e) => e.preventDefault()}>
          <QuizMain>
            <Question>
              True or False: A user can set their contacts as safe senders by toggling on this option in the Junk email options.
            </Question>
            <Answers>
              {["True", "False"].map((a) => (
                <Answer key={a}>
                  <Radio type="radio" name="answer" checked={answer === a} onChange={() => setAnswer(a)} />
                  {a}
                </Answer>
              ))}
            </Answers>
            <CheckButton type="submit">
              <svg width="35" height="35" viewBox="0 0 35 35">
                <circle cx="17.500" cy="17.500" r="17.500" fill="#fff" />
                <path d="M8 17l7 7 12-12" fill="none" stroke="#3f6ed6" strokeWidth="5" />
              </svg>
              Check
            </CheckButton>
          </QuizMain>
          <QuizRail />
        </Quiz>
      </Stage>

      <Controls>
        <button aria-label="Play">
          <svg width="18" height="20" viewBox="0 0 18 20"><path d="M0 0l18 10L0 20z" fill="#fff" /></svg>
        </button>
        <Seek type="range" step="0.01" aria-label="Seek" value={pos} onChange={(e) => setPos(+e.target.value)} />
        <svg width="20" height="22" viewBox="0 0 20 22">
          <path d="M5 0l6 5 8-2-3 8 4 7-8-1-6 5-1-8-5-4 6-3z" fill="#111" />
          <path d="M7 6l3 3 4-1-2 4 2 3-4-1-3 3v-4l-3-2 3-1z" fill="#888" />
        </svg>
        <Time>0:09<span> / 2:00</span></Time>
        <ControlIcons>
          <button aria-label="Playback rate">
            <svg width="24" height="20" viewBox="0 0 24 20">
              <path d="M3 20A12 12 0 1121 20z" fill="#fff" />
              <g fill="#2c2c2c"><circle cx="4" cy="12" r="1.7" /><circle cx="7" cy="6" r="1.7" /><circle cx="12" cy="3.500" r="1.600" /><circle cx="17" cy="6" r="1.7" /><circle cx="20" cy="12" r="1.7" /><circle cx="12" cy="15" r="2.400" /><path d="M11 14l2-8 1 1-1 8z" /></g>
            </svg>
          </button>
          <button aria-label="Mute">
            <svg width="22" height="20" viewBox="0 0 22 20">
              <path d="M0 7h4l7-6v18l-7-6H0z" fill="#fff" />
              <path d="M13 6q4 4 0 8M15 4q6 6 0 12M17 1q8 9 0 18" fill="none" stroke="#fff" strokeWidth="1.7" />
            </svg>
          </button>
          <button aria-label="Captions">
            <svg width="26" height="20" viewBox="0 0 26 20">
              <path d="M0 0h26v20H0z" fill="#fff" />
              <rect x="3" y="2" width="20" height="16" rx="2" fill="#2c2c2c" />
              <text x="13" y="15" textAnchor="middle" fontFamily="Liberation Sans" fontWeight="700" fontSize="13" fill="#fff">CC</text>
            </svg>
          </button>
          <button aria-label="Quality">
            <svg width="20" height="20" viewBox="0 0 20 20" fill="none" stroke="#5c5c5c">
              <circle cx="10" cy="10" r="5.500" strokeWidth="4" />
              <circle cx="10" cy="10" r="8.500" strokeWidth="3" strokeDasharray="3.600 3.076" />
            </svg>
          </button>
          <button aria-label="Exit fullscreen">
            <svg width="20" height="20" viewBox="0 0 20 20" fill="#fff"><path d="M11 9V1l2 2 4-3 3 3-3 4 2 2zM9 11v8l-2-2-4 3-3-3 3-4-2-2z" /></svg>
          </button>
        </ControlIcons>
      </Controls>
    </Player>
  );
}
